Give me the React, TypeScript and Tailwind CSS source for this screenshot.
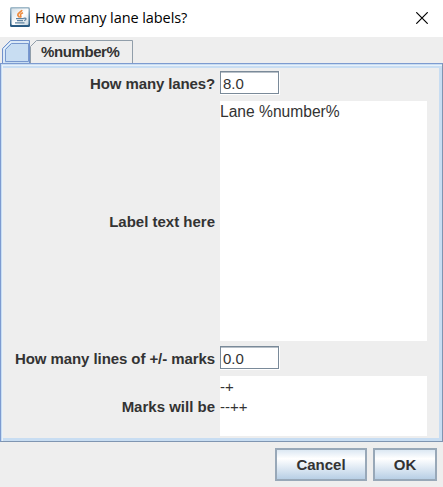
import type { ReactNode } from 'react';

function JavaIcon() {
  return (
    <svg width="20" height="20" viewBox="0 0 20 20" className="shrink-0">
      <defs>
        <linearGradient id="edge" x1="0" y1="0" x2="0" y2="1">
          <stop offset="0" stopColor="#a3bccb" />
          <stop offset="1" stopColor="#24567f" />
        </linearGradient>
        <linearGradient id="face" x1="0" y1="0" x2="1" y2="1">
          <stop offset="0" stopColor="#d3dfe6" />
          <stop offset=".55" stopColor="#ffffff" />
          <stop offset="1" stopColor="#c6d5df" />
        </linearGradient>
      </defs>
      <rect x="0" y="0" width="20" height="20" rx="1.5" fill="url(#edge)" />
      <rect x="1.5" y="1.5" width="17" height="16.5" rx="1" fill="url(#face)" />
      <path d="M12 3C11.500 5 7.500 5.800 7.800 8c.2 1.200 1.400 1.500 1.700 2.600M13 5.800c-2 .8-3 1.600-2.400 2.600.5.800.5 1.400-.2 2.200" fill="none" stroke="#ee8a3c" strokeWidth="1.600" />
      <path d="M6 11.700h7.500M7 13.700h6M5 15.800h9.500M13.500 11.300c3-.8 3.500 1.300.7 2.400" fill="none" stroke="#5f83a0" strokeWidth="1.300" />
    </svg>
  );
}

function Label({ children }: { children: ReactNode }) {
  return <div className="flex items-center justify-end whitespace-nowrap pt-px pr-[5px] font-bold">{children}</div>;
}

function NumberField({ value }: { value: string }) {
  return (
    <div className="h-6 w-[60px] border-r border-b border-white">
      <div className="flex h-[23px] w-[59px] items-center border border-[#7a8a99] bg-white pt-[2px] pl-[2px] shadow-[inset_0_1px_0_#b8c0c8]">
        {value}
      </div>
    </div>
  );
}

function Button({ children, width }: { children: ReactNode; width: string }) {
  return (
    <button className={`h-[33px] border-2 border-[#98a8b8] bg-linear-to-b from-[#dce8f3] via-white via-30% to-[#b8cfe5] pt-px text-center font-bold ${width}`}>
      {children}
    </button>
  );
}

export default function App() {
  return (
    <div className="flex h-[487px] w-[443px] flex-col overflow-hidden bg-[#eeeeee] font-['Liberation_Sans',Arial,sans-serif] text-[15px] leading-5 text-[#333333]">
      <header className="flex h-[37px] shrink-0 items-center bg-white pr-[15px] pb-[3px] pl-[10px] text-black">
        <JavaIcon />
        <h1 className="ml-[5px] pt-px font-['Open_Sans','Noto_Sans',sans-serif] text-[14.500px] tracking-[-0.080px]">How many lane labels?</h1>
        <svg className="mt-px ml-auto" width="12" height="12" viewBox="0 0 12 12">
          <path d="M.3.3l11.400 11.400M11.700.3.3 11.700" stroke="#000" strokeWidth="1.200" />
        </svg>
      </header>

      <nav className="flex h-[26px] shrink-0">
        <svg width="133" height="26" viewBox="0 0 133 26" className="absolute">
          <path d="M30.500 26V9.500L36.500 3.500H132.500V26" fill="#eeeeee" stroke="#919eaa" />
          <path d="M2.500 26V11.500L10.500 3.500H29.500V26" fill="#c8ddf2" stroke="#7191cc" />
          <path d="M4 26V12L11 5H28.500" fill="none" stroke="#eef5fc" strokeWidth="1" />
          <path d="M5.500 24.500V12.500L11.500 6.500H28.500V24.500Z" fill="#c8ddf2" stroke="#7898ce" />
        </svg>
        <span className="relative ml-[41px] mt-[5px] font-bold tracking-[-0.400px]">%number%</span>
      </nav>

      <main className="h-[379px] shrink-0 border border-[#7d9bd0] border-r-[#7f95b1] border-b-[#7f95b1] bg-[#c8ddf2] pt-px pl-px">
        <div className="h-[376px] w-[440px] border-t border-l border-[#e8f1fa] bg-[#c8ddf2] pr-[3px] pb-[2px]">
          <div className="grid h-[372px] w-full grid-cols-[217px_207px] grid-rows-[25px_240px_25px_60px] gap-y-[5px] border-t-2 border-[#c8ddf2] bg-[#eeeeee] pt-[3px]">
            <Label><span className="tracking-[-0.120px]">How many lanes?</span></Label>
            <NumberField value="8.0" />
            <Label>Label text here</Label>
            <div className="bg-white pt-px text-[15.600px]">Lane %number%</div>
            <Label><span className="tracking-[-0.080px]">How many lines of +/- marks</span></Label>
            <NumberField value="0.0" />
            <Label>Marks will be</Label>
            <div className="whitespace-pre bg-white pt-px">{'-+\n--++'}</div>
          </div>
        </div>
      </main>

      <footer className="flex gap-[6px] pl-[275px] pt-[6px]">
        <Button width="w-[92px]">Cancel</Button>
        <Button width="w-[64px]">OK</Button>
      </footer>
    </div>
  );
}
